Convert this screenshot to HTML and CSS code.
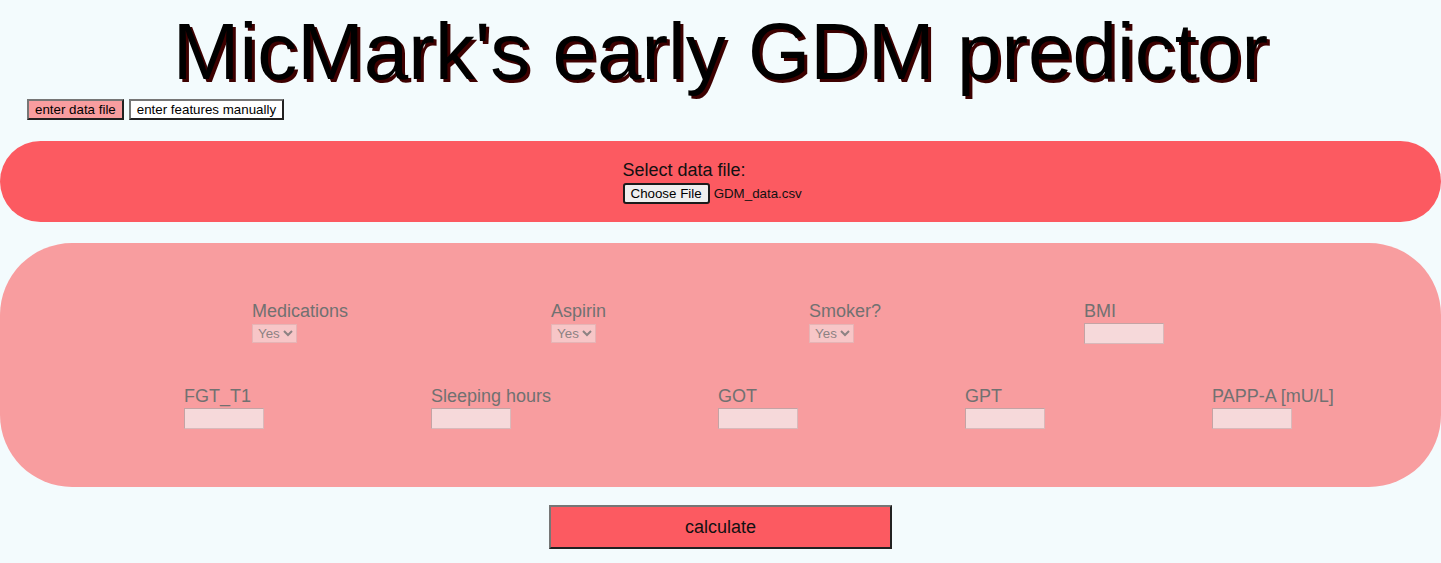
FILE: index.html
```html
<!DOCTYPE html>
<html>
<head>
<meta charset="utf-8">
<title>MicMark's early GDM predictor</title>
<link rel="stylesheet" href="styles.css">
</head>
<body>
<h1 class="title">MicMark's early GDM predictor</h1>
<div class="tabs">
  <button class="tab tab-active">enter data file</button>
  <button class="tab tab-plain">enter features manually</button>
</div>
<section class="file-panel">
  <div class="file-inner">
    <div class="file-label">Select data file:</div>
    <div class="file-row">
      <button class="file-btn">Choose File</button>
      <span class="file-name">GDM_data.csv</span>
    </div>
  </div>
</section>
<section class="features-panel">
  <div class="row row-1">
    <div class="field">
      <label class="field-label">Medications</label>
      <select class="field-select" disabled><option>Yes</option></select>
    </div>
    <div class="field">
      <label class="field-label">Aspirin</label>
      <select class="field-select" disabled><option>Yes</option></select>
    </div>
    <div class="field">
      <label class="field-label">Smoker?</label>
      <select class="field-select" disabled><option>Yes</option></select>
    </div>
    <div class="field">
      <label class="field-label">BMI</label>
      <input class="field-input" type="text" disabled>
    </div>
  </div>
  <div class="row row-2">
    <div class="field">
      <label class="field-label">FGT_T1</label>
      <input class="field-input" type="text" disabled>
    </div>
    <div class="field">
      <label class="field-label">Sleeping hours</label>
      <input class="field-input" type="text" disabled>
    </div>
    <div class="field">
      <label class="field-label">GOT</label>
      <input class="field-input" type="text" disabled>
    </div>
    <div class="field">
      <label class="field-label">GPT</label>
      <input class="field-input" type="text" disabled>
    </div>
    <div class="field">
      <label class="field-label">PAPP-A [mU/L]</label>
      <input class="field-input" type="text" disabled>
    </div>
  </div>
</section>
<div class="actions">
  <button class="calc-btn">calculate</button>
</div>
</body>
</html>
```
FILE: styles.css
```css
html, body {
  margin: 0;
  padding: 0;
}
body {
  background: #f3fbfd;
  font-family: "Liberation Sans", Arial, sans-serif;
  color: #000;
}
.title {
  margin: 7px 0 0;
  font-size: 80px;
  font-weight: normal;
  line-height: 89px;
  text-align: center;
  text-shadow: 3px 3px 0 #3d0000;
}
.tabs {
  display: flex;
  gap: 5px;
  padding-left: 27px;
  margin-top: 3px;
}
.tab {
  font-family: "Liberation Sans", Arial, sans-serif;
  font-size: 13.333px;
  line-height: 15px;
  padding: 1px 6px;
  border: 2px outset #767676;
  color: #000;
  margin: 0;
}
.tab-active {
  background: #f89d9f;
}
.tab-plain {
  background: #ffffff;
}
.file-panel {
  margin-top: 21px;
  height: 81px;
  background: #fc5a61;
  border-radius: 41px;
  display: flex;
  justify-content: center;
  box-sizing: border-box;
  padding-top: 19px;
}
.file-inner {
  width: 196px;
}
.file-label {
  font-size: 18px;
  line-height: 21px;
  color: #111;
}
.file-row {
  display: flex;
  align-items: center;
  gap: 4px;
  margin-top: 2px;
}
.file-btn {
  font-family: "Liberation Sans", Arial, sans-serif;
  font-size: 13.333px;
  line-height: 15px;
  height: 21px;
  padding: 0 6px;
  margin: 0;
  background: #efefef;
  border: 2px solid #1b1b1b;
  border-radius: 3px;
  color: #000;
}
.file-name {
  font-size: 13.333px;
  color: #111;
}
.features-panel {
  margin-top: 21px;
  height: 244px;
  background: #f89d9f;
  border-radius: 72px;
  box-sizing: border-box;
  padding-top: 58px;
  display: flex;
  flex-direction: column;
  gap: 42px;
}
.row {
  display: flex;
  align-items: flex-start;
}
.row-1 {
  padding-left: 252px;
  gap: 203px;
}
.row-2 {
  padding-left: 184px;
  gap: 167px;
}
.field {
  display: flex;
  flex-direction: column;
  align-items: flex-start;
}
.field-label {
  font-size: 18px;
  line-height: 21px;
  color: #717171;
}
.field-select {
  margin-top: 2px;
  height: 19px;
  font-family: "Liberation Sans", Arial, sans-serif;
  font-size: 13.333px;
  background-color: #f7c6c7;
  color: #8d8283;
  border: 1px solid #e6b4b5;
  border-radius: 0;
  padding: 0 0 0 1px;
  opacity: 1;
}
.field-input {
  margin: 1px 0 0;
  box-sizing: border-box;
  width: 80px;
  height: 21px;
  background: #f6d9da;
  border: 1px solid #c4a3a4;
  border-right-color: #d9b9ba;
  border-bottom-color: #d9b9ba;
  padding: 0;
}
.actions {
  display: flex;
  justify-content: center;
  margin-top: 18px;
}
.calc-btn {
  width: 343px;
  height: 44px;
  margin: 0;
  background: #fc5a61;
  border: 2px outset #767676;
  font-family: "Liberation Sans", Arial, sans-serif;
  font-size: 18px;
  color: #111;
}
```
